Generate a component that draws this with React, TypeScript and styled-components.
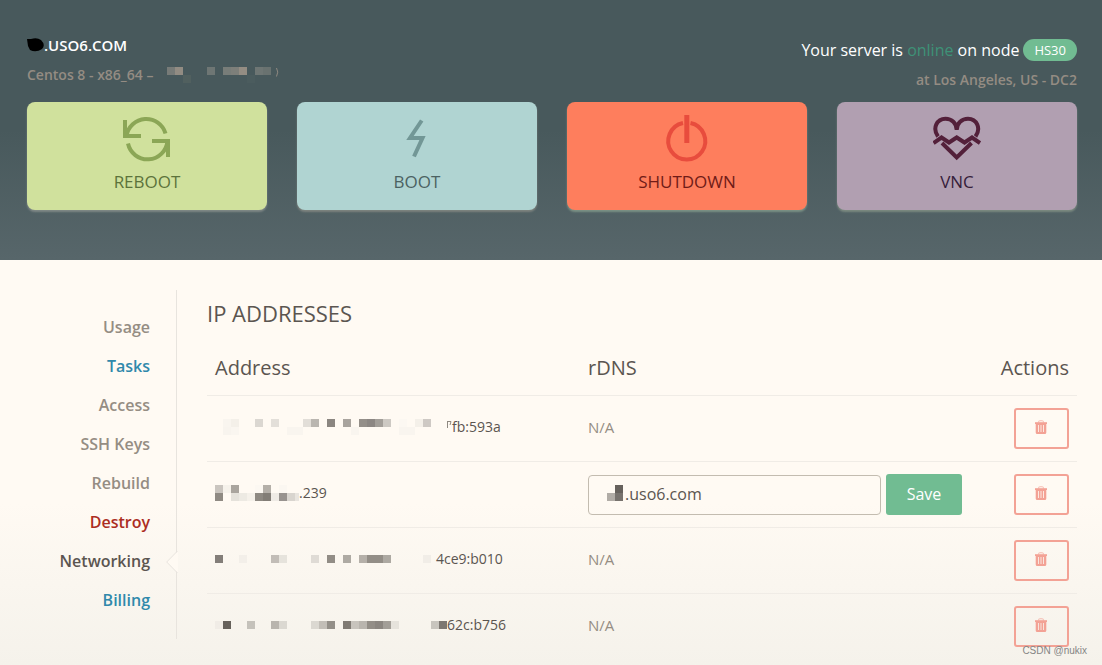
import React from "react";
import styled, { createGlobalStyle } from "styled-components";

const GlobalStyle = createGlobalStyle`
  *, *::before, *::after { box-sizing: border-box; }
  body {
    margin: 0;
    background: #fffaf3;
    color: #5b5550;
    font-family: "Open Sans", "Noto Sans", sans-serif;
    font-size: 14px;
  }
  button, input { font-family: inherit; }
`;

const Page = styled.div`
  position: relative;
  display: flex;
  flex-direction: column;
  min-height: 100vh;
`;

const Header = styled.header`
  padding: 32px 25px 50px 27px;
  background: linear-gradient(#48595c, #48595c 50%, #57666a);
`;

const HeaderInfo = styled.div`
  display: flex;
  justify-content: space-between;
  gap: 24px;
  height: 70px;
`;

const HostName = styled.h1`
  display: flex;
  align-items: center;
  margin: 0;
  color: #fff;
  font-size: 15px;
  font-weight: 600;
  line-height: 26px;
`;

const HostDetail = styled.p`
  display: flex;
  align-items: center;
  gap: 14px;
  margin: 4px 0 0;
  color: #948c83;
  font-size: 14px;
  font-weight: 600;
  line-height: 26px;
`;

const Status = styled.div`
  padding-top: 4px;
  text-align: right;
`;

const StatusLine = styled.p`
  display: flex;
  align-items: center;
  justify-content: flex-end;
  gap: 4px;
  margin: 0;
  color: #fff;
  font-size: 16px;
  line-height: 28px;
`;

const Online = styled.span`
  color: #3e9277;
`;

const NodeBadge = styled.span`
  padding: 0 11px;
  border-radius: 11px;
  background: #71bc92;
  color: #fff;
  font-size: 13px;
  line-height: 22px;
`;

const Location = styled.p`
  margin: 3px 0 0;
  color: #948c83;
  font-size: 14px;
  font-weight: 600;
  line-height: 26px;
`;

const ActionGrid = styled.div`
  display: grid;
  grid-template-columns: repeat(4, 1fr);
  gap: 30px;
`;

const ActionCard = styled.button<{ $bg: string; $ink: string; $icon: string; $edge: string }>`
  display: flex;
  flex-direction: column;
  align-items: center;
  gap: 8px;
  padding: 12px 12px 16px;
  border: 0;
  border-radius: 8px;
  background: ${(p) => p.$bg};
  box-shadow: 0 2px 2px ${(p) => p.$edge};
  color: ${(p) => p.$ink};
  font-size: 17px;
  line-height: 24px;
  cursor: pointer;

  svg {
    fill: none;
    stroke: ${(p) => p.$icon};
    stroke-width: 4;
  }
`;

const Content = styled.main`
  flex: 1;
  display: flex;
  align-items: flex-start;
  padding: 30px 25px 5px 27px;
  background: linear-gradient(#fffaf3 60%, #f5f2eb);
`;

const SideNav = styled.nav`
  flex: 0 0 150px;
  padding: 18px 0 19px;
  border-right: 1px solid #e8e4de;
`;

const NavList = styled.ul`
  margin: 0;
  padding: 0;
  list-style: none;
`;

const NavItem = styled.li`
  position: relative;
`;

const NavLink = styled.a<{ $color: string }>`
  display: block;
  padding-right: 26px;
  color: ${(p) => p.$color};
  font-size: 16px;
  font-weight: 600;
  line-height: 39px;
  text-align: right;
  text-decoration: none;
`;

const Notch = styled.svg`
  position: absolute;
  top: 8px;
  right: -2px;
`;

const Panel = styled.section`
  flex: 1;
  min-width: 0;
  padding-left: 30px;
`;

const PanelTitle = styled.h2`
  margin: 0;
  color: #5b5550;
  font-size: 22px;
  font-weight: 400;
  line-height: 46px;
`;

const Table = styled.table`
  width: 100%;
  border-collapse: separate;
  border-spacing: 0;
  table-layout: fixed;
`;

const HeadCell = styled.th<{ $width: string; $align?: string }>`
  width: ${(p) => p.$width};
  padding: 18px 8px 13px;
  font-size: 20px;
  font-weight: 500;
  line-height: 28px;
  text-align: ${(p) => p.$align ?? "left"};
`;

const Cell = styled.td<{ $align?: string; $text?: boolean }>`
  padding: ${(p) => (p.$text ? "10px 8px 14px" : "12px 8px")};
  border-top: 1px solid #f0ece6;
  text-align: ${(p) => p.$align ?? "left"};
  vertical-align: middle;
`;

const AddressLine = styled.div`
  display: flex;
  align-items: center;
  font-size: 14px;
  line-height: 20px;
`;

const Missing = styled.span`
  color: #958d83;
  font-size: 15px;
`;

const RdnsForm = styled.form`
  display: flex;
  align-items: center;
  gap: 5px;
  margin: 0;
`;

const InputWrap = styled.div`
  position: relative;
  flex: 1;
  min-width: 0;
`;

const RdnsInput = styled.input`
  display: block;
  width: 100%;
  height: 40px;
  padding: 0 12px 2px 36px;
  border: 1px solid #c3bcb0;
  border-radius: 4px;
  background: transparent;
  color: #5b5550;
  font-size: 16px;
`;

const InputMask = styled.div`
  position: absolute;
  top: 10px;
  left: 19px;
  line-height: 0;
`;

const SaveButton = styled.button`
  width: 76px;
  height: 41px;
  padding: 0 0 2px;
  border: 0;
  border-radius: 3px;
  background: #71bc92;
  color: #fff;
  font-size: 16px;
  cursor: pointer;
`;

const DeleteButton = styled.button`
  display: inline-flex;
  align-items: center;
  justify-content: center;
  width: 55px;
  height: 41px;
  padding: 0 2px 3px 0;
  border: 2px solid #f3a295;
  border-radius: 3px;
  background: transparent;
  color: #f3a295;
  vertical-align: top;
  cursor: pointer;
`;

const Watermark = styled.span`
  position: absolute;
  right: 15px;
  bottom: 6px;
  color: #858585;
  font-family: "Liberation Sans", Arial, sans-serif;
  font-size: 10px;
  line-height: 16px;
`;

/* One block of a masked text: column, row and colour on an 8px grid. */
type Block = [number, number, string];

interface MosaicProps {
  blocks: Block[];
  width: number;
  height?: number;
  /* Path of the sliver of a glyph that shows past the mask. */
  sliver?: string;
}

function Mosaic({ blocks, width, height = 16, sliver }: MosaicProps) {
  return (
    <svg width={width} height={height} aria-hidden="true">
      {blocks.map(([col, row, color]) => (
        <rect
          key={`${col}-${row}`}
          x={col * 8}
          y={row * 8}
          width="8"
          height="8"
          fill={color}
          shapeRendering="crispEdges"
        />
      ))}
      {sliver && <path d={sliver} fill="none" stroke="#8f8981" />}
    </svg>
  );
}

function RebootIcon() {
  return (
    <svg width="48" height="48" aria-hidden="true">
      <path d="M2 6V22H18M3.500 22A20 20 0 0 1 42.500 19.500" />
      <path d="M45 43V27H29M44.500 27A20 20 0 0 1 5 29.500" />
    </svg>
  );
}

function BootIcon() {
  return (
    <svg width="48" height="48" aria-hidden="true">
      <path d="M28.700 6.500L17 24H29.500L21 42.500" />
    </svg>
  );
}

function ShutdownIcon() {
  return (
    <svg width="48" height="48" aria-hidden="true">
      <path d="M27.500 9A18.500 18.500 0 1 1 20 9" />
      <path d="M23.800 1V29" strokeWidth="5" />
    </svg>
  );
}

function VncIcon() {
  return (
    <svg width="48" height="48" aria-hidden="true">
      <path d="M5 22.500C-1 14 4 4.700 12.500 4.700C18.500 4.700 23.700 9 23.700 16C23.700 9 29 4.700 35 4.700C43.500 4.700 48.500 14 42.500 22.500" />
      <path d="M.5 29L8.500 23.500L16 28.500L23.700 23.500L31.500 28.500L39 23.500L47 29" />
      <path d="M9 29L23.700 43.500L38.500 29" />
    </svg>
  );
}

function TrashIcon() {
  return (
    <svg width="12" height="14" viewBox="0 0 12 14" fill="currentColor" aria-hidden="true">
      <path d="M3 2.500C3 1 4 .2 5 .2H7C8 .2 9 1 9 2.500H8C8 1.700 7.600 1.200 7 1.200H5C4.400 1.200 4 1.700 4 2.500Z" opacity=".7" />
      <path d="M0 2.200H12V4H0Z" />
      <path
        fillRule="evenodd"
        d="M.7 4H11.300V12.500Q11.300 14 9.800 14H2.200Q.7 14 .7 12.500ZM3 5V12H3.800V5ZM5.600 5V12H6.400V5ZM8.200 5V12H9V5Z"
      />
    </svg>
  );
}

const actions = [
  { label: "REBOOT", bg: "#d0e19d", ink: "#5c733b", icon: "#8ba656", edge: "#7f8886", Icon: RebootIcon },
  { label: "BOOT", bg: "#b0d4d2", ink: "#4b6262", icon: "#729796", edge: "#7d837f", Icon: BootIcon },
  { label: "SHUTDOWN", bg: "#fe7e5d", ink: "#701b17", icon: "#e84c3d", edge: "#7b9185", Icon: ShutdownIcon },
  { label: "VNC", bg: "#b19fb1", ink: "#36203a", icon: "#53203a", edge: "#7b8a80", Icon: VncIcon },
];

const muted = "#958d83";
const navItems = [
  { label: "Usage", color: muted },
  { label: "Tasks", color: "#3089ab" },
  { label: "Access", color: muted },
  { label: "SSH Keys", color: muted },
  { label: "Rebuild", color: muted },
  { label: "Destroy", color: "#ac2d22" },
  { label: "Networking", color: "#5b5550", active: true },
  { label: "Billing", color: "#3089ab" },
];

const addresses: { tail: string; width: number; blocks: Block[]; editable?: boolean; sliver?: string }[] = [
  {
    tail: "fb:593a",
    width: 237,
    sliver: "M232.500 2V9M232 2.500H236L235 6",
    blocks: [
      [1, 0, "#f9f5ef"], [2, 0, "#f4f0e9"], [5, 0, "#dbd7d1"], [7, 0, "#e3dfd9"], [11, 0, "#e2ded8"],
      [12, 0, "#bab6b0"], [14, 0, "#8b8680"], [16, 0, "#a9a49e"], [18, 0, "#948f89"], [19, 0, "#8c8783"],
      [20, 0, "#a39f99"], [21, 0, "#cdc9c3"], [23, 0, "#fcf8f2"], [25, 0, "#f4f0e9"], [26, 0, "#cec9c4"],
      [1, 1, "#f8f4ee"], [2, 1, "#faf6f0"], [9, 1, "#f9f5ef"], [10, 1, "#f9f5ef"], [17, 1, "#f9f5ef"],
      [23, 1, "#f9f5ef"], [24, 1, "#f9f5ef"],
    ],
  },
  {
    tail: ".239",
    width: 84,
    editable: true,
    blocks: [
      [0, 0, "#cac5bf"], [1, 0, "#f6f2eb"], [2, 0, "#aaa59e"], [5, 0, "#fcf8f2"], [6, 0, "#b4afa8"],
      [8, 0, "#fbf7f1"], [0, 1, "#8f8a83"], [2, 1, "#e5e2db"], [3, 1, "#edeae3"], [4, 1, "#f5f1ea"],
      [5, 1, "#8e8982"], [6, 1, "#827d76"], [7, 1, "#efebe5"], [8, 1, "#98938f"], [9, 1, "#d9d5cf"],
      [10, 1, "#e9e5df"],
    ],
  },
  {
    tail: "4ce9:b010",
    width: 221,
    blocks: [
      [0, 0, "#837e79"], [3, 0, "#f3efe9"], [7, 0, "#c2bdb7"], [8, 0, "#e6e3dc"], [12, 0, "#dfdbd5"],
      [14, 0, "#928d86"], [16, 0, "#aeaaa3"], [18, 0, "#b5b0a9"], [19, 0, "#938e87"], [20, 0, "#938e87"],
      [21, 0, "#ada9a2"], [26, 0, "#f1ede7"],
    ],
  },
  {
    tail: "62c:b756",
    width: 232,
    blocks: [
      [0, 0, "#f0ece6"], [1, 0, "#66615b"], [4, 0, "#c5c2bb"], [7, 0, "#b9b5ae"], [8, 0, "#dbd8d1"],
      [12, 0, "#dbd8d1"], [13, 0, "#c2beb7"], [14, 0, "#938f88"], [16, 0, "#807b74"], [17, 0, "#c8c4bd"],
      [18, 0, "#b9b5ae"], [19, 0, "#938e87"], [20, 0, "#8b8680"], [21, 0, "#a29e97"], [22, 0, "#e6e3dc"],
      [27, 0, "#c8c5be"], [28, 0, "#7c7771"],
    ],
  },
];

const systemBlocks: Block[] = [
  [0, 0, "#777b78"], [1, 0, "#928c83"], [2, 1, "#51605f"], [5, 0, "#6e7674"], [7, 0, "#787d79"],
  [8, 0, "#7d7f7a"], [9, 0, "#948d83"], [11, 0, "#6e7674"], [12, 0, "#697270"], [10, 1, "#4b5c5e"],
];

const inputBlocks: Block[] = [
  [0, 1, "#b1aca6"], [1, 0, "#66615c"], [1, 1, "#77726d"],
];

export default function App() {
  return (
    <>
      <GlobalStyle />
      <Page>
        <Header>
          <HeaderInfo>
            <div>
              <HostName>
                <svg width="17" height="14" aria-hidden="true">
                  <path d="M0 1H4Q10-1 14 2Q19 7 15 11Q9 15 3 12L1 8Z" fill="#000" />
                </svg>
                .USO6.COM
              </HostName>
              <HostDetail>
                Centos 8 - x86_64 –
                <Mosaic blocks={systemBlocks} width={112} sliver="M109.500 1Q112 5 109.500 9.500" />
              </HostDetail>
            </div>
            <Status>
              <StatusLine>
                <span>
                  Your server is <Online>online</Online> on node
                </span>
                <NodeBadge>HS30</NodeBadge>
              </StatusLine>
              <Location>at Los Angeles, US - DC2</Location>
            </Status>
          </HeaderInfo>
          <ActionGrid>
            {actions.map(({ label, bg, ink, icon, edge, Icon }) => (
              <ActionCard key={label} type="button" $bg={bg} $ink={ink} $icon={icon} $edge={edge}>
                <Icon />
                {label}
              </ActionCard>
            ))}
          </ActionGrid>
        </Header>

        <Content>
          <SideNav aria-label="Server">
            <NavList>
              {navItems.map((item) => (
                <NavItem key={item.label}>
                  <NavLink href="#" $color={item.color} aria-current={item.active ? "page" : undefined}>
                    {item.label}
                  </NavLink>
                  {item.active && (
                    <Notch width="12" height="24" aria-hidden="true">
                      <path d="M12 1L1 12L12 23Z" fill="#fffaf3" />
                      <path d="M11.500 1L.7 12L11.500 23" fill="none" stroke="#e8e4de" />
                    </Notch>
                  )}
                </NavItem>
              ))}
            </NavList>
          </SideNav>

          <Panel>
            <PanelTitle>IP ADDRESSES</PanelTitle>
            <Table>
              <thead>
                <tr>
                  <HeadCell $width="auto">Address</HeadCell>
                  <HeadCell $width="390px">rDNS</HeadCell>
                  <HeadCell $width="107px" $align="right">Actions</HeadCell>
                </tr>
              </thead>
              <tbody>
                {addresses.map((address) => (
                  <tr key={address.tail}>
                    <Cell $text>
                      <AddressLine>
                        <Mosaic
                          blocks={address.blocks}
                          width={address.width}
                          height={address.blocks.some(([, row]) => row === 1) ? 16 : 8}
                          sliver={address.sliver}
                        />
                        {address.tail}
                      </AddressLine>
                    </Cell>
                    <Cell $text={!address.editable}>
                      {address.editable ? (
                        <RdnsForm onSubmit={(event) => event.preventDefault()}>
                          <InputWrap>
                            <RdnsInput aria-label="rDNS" defaultValue=".uso6.com" />
                            <InputMask>
                              <Mosaic blocks={inputBlocks} width={16} />
                            </InputMask>
                          </InputWrap>
                          <SaveButton type="submit">Save</SaveButton>
                        </RdnsForm>
                      ) : (
                        <Missing>N/A</Missing>
                      )}
                    </Cell>
                    <Cell $align="right">
                      <DeleteButton type="button" aria-label="Delete address">
                        <TrashIcon />
                      </DeleteButton>
                    </Cell>
                  </tr>
                ))}
              </tbody>
            </Table>
          </Panel>
        </Content>
        <Watermark>CSDN @nukix</Watermark>
      </Page>
    </>
  );
}
